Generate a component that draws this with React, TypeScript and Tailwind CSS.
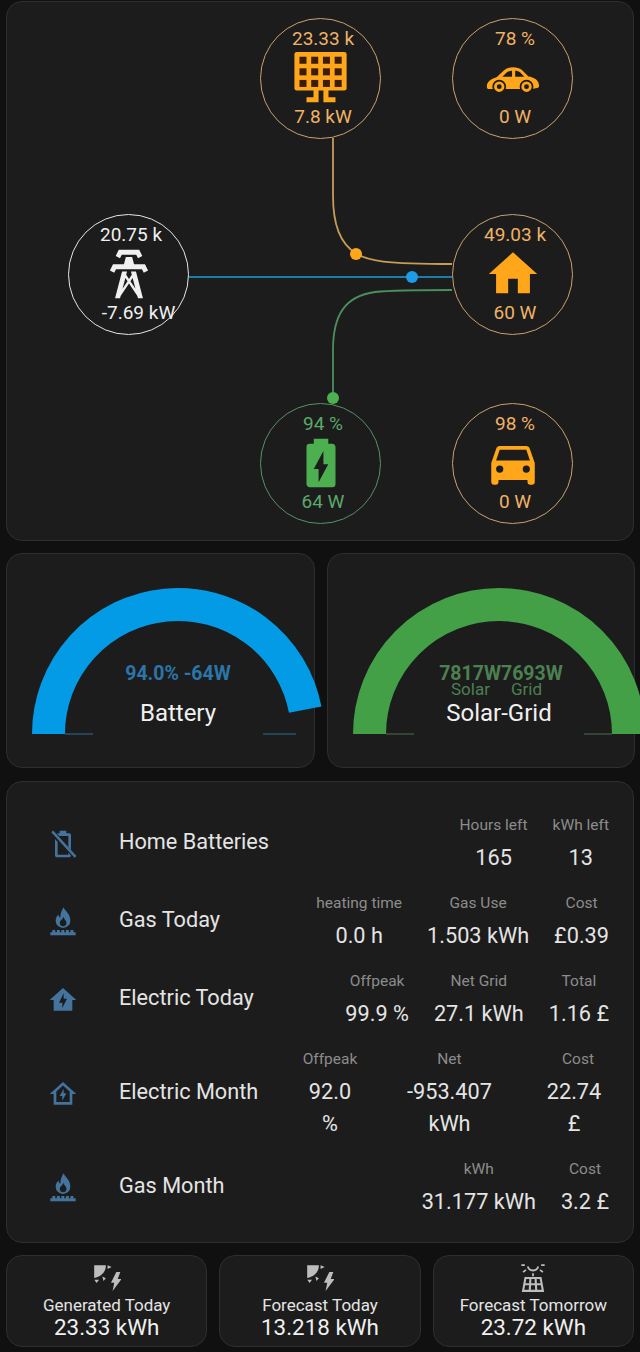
import React from "react";

const ORANGE = "#ffa61a";
const BLUE = "#44739e";

function Solar() {
  const holes = [];
  for (let r = 0; r < 3; r++) {
    for (let c = 0; c < 4; c++) {
      holes.push(<rect key={`${r}-${c}`} x={3.1 + c * 4.85} y={3.2 + r * 4.8} width="2.9" height="2.9" fill="#3a1d05" />);
    }
  }
  return (
    <svg viewBox="0 0 24 24" className="w-[58px] h-[58px]" fill={ORANGE}>
      <rect x="1" y="1.2" width="21.6" height="16" rx="1" />
      {holes}
      <path d="M8.9 17H11V20H8.9ZM13 17H15.1V20H13ZM6 20H11V22H6ZM13 20H18V22H13Z" />
    </svg>
  );
}

function CarSports() {
  return (
    <svg viewBox="0 0 24 24" className="w-[58px] h-[58px]">
      <path fill={ORANGE} d="M1.2 15.8C1 13.8 2.6 12.4 5.2 11.7L8.2 8.9C10.2 7.1 13.8 7.1 15.7 8.7L18.4 11.4C20.6 11.7 22.6 12.7 22.8 15.2C22.8 15.7 22.5 16 22 16.1L19.8 16.6H4.2L2 16.6C1.5 16.5 1.2 16.2 1.2 15.8Z" />
      <path fill="#1c1c1c" d="M7.6 11.5L9.4 9.7C10 9.2 10.9 9 11.6 9V11.5ZM12.9 9C13.7 9 14.4 9.2 15 9.7L16.7 11.5H12.9Z" />
      <circle cx="6.3" cy="15.6" r="2.5" fill={ORANGE} stroke="#1c1c1c" strokeWidth="0.7" />
      <circle cx="6.3" cy="15.6" r="1" fill="#1c1c1c" />
      <circle cx="17.6" cy="15.6" r="2.5" fill={ORANGE} stroke="#1c1c1c" strokeWidth="0.7" />
      <circle cx="17.6" cy="15.6" r="1" fill="#1c1c1c" />
    </svg>
  );
}

function Tower() {
  return (
    <svg viewBox="0 0 24 24" className="w-[58px] h-[58px]" fill="#f0f0f0">
      <path d="M8.28,5.45L6.5,4.55L7.76,2H16.23L17.5,4.55L15.72,5.44L15,4H9L8.28,5.45M18.62,8H14.09L13.3,5H10.7L9.91,8H5.38L4.1,10.55L5.89,11.44L6.62,10H17.38L18.1,11.45L19.89,10.56L18.62,8M17.77,22H15.7L15.46,21.1L12,15.9L8.53,21.1L8.3,22H6.23L9.12,11H11.19L10.83,12.35L12,14.1L13.16,12.35L12.81,11H14.88L17.77,22M11.4,15L10.5,13.65L9.32,18.13L11.4,15M14.68,18.12L13.5,13.64L12.6,15L14.68,18.12Z" />
    </svg>
  );
}

function Home() {
  return (
    <svg viewBox="0 0 24 24" className="w-[58px] h-[58px]" fill={ORANGE}>
      <path d="M10,20V14H14V20H19V12H22L12,3L2,12H5V20H10Z" />
    </svg>
  );
}

function BatteryCharging() {
  return (
    <svg viewBox="0 0 24 24" className="w-[58px] h-[58px]" fill="#4caf50">
      <path fillRule="evenodd" d="M16.67,4H15V2H9V4H7.33A1.33,1.33 0 0,0 6,5.33V20.67C6,21.4 6.6,22 7.33,22H16.67A1.33,1.33 0 0,0 18,20.67V5.33C18,4.6 17.4,4 16.67,4M11,20V14.5H9L13,7V12.5H15L11,20Z" />
    </svg>
  );
}

function Car() {
  return (
    <svg viewBox="0 0 24 24" className="w-[58px] h-[58px]" fill={ORANGE}>
      <path fillRule="evenodd" d="M5,11L6.5,6.5H17.5L19,11H5ZM17.5,16A1.5,1.5 0 0,1 16,14.5A1.5,1.5 0 0,1 17.5,13A1.5,1.5 0 0,1 19,14.5A1.5,1.5 0 0,1 17.5,16ZM6.5,16A1.5,1.5 0 0,1 5,14.5A1.5,1.5 0 0,1 6.5,13A1.5,1.5 0 0,1 8,14.5A1.5,1.5 0 0,1 6.5,16ZM18.92,6C18.72,5.42 18.16,5 17.5,5H6.5C5.84,5 5.28,5.42 5.08,6L3,12V20A1,1 0 0,0 4,21H5A1,1 0 0,0 6,20V19H18V20A1,1 0 0,0 19,21H20A1,1 0 0,0 21,20V12L18.92,6Z" />
    </svg>
  );
}

function BatteryOff() {
  return (
    <svg viewBox="0 0 24 24" className="w-8 h-8" fill={BLUE}>
      <path d="M9.5 2h5v2h2.2C17.5 4 18 4.6 18 5.3v11.2l-2-2.2V6H9.2L7.5 4.2C7.7 4.1 7.9 4 8 4h1.5ZM6 8.3l2 2.2V20h8v-1.5l2 2.2c-.1.8-.7 1.3-1.3 1.3H7.3C6.6 22 6 21.4 6 20.7Z" />
      <path d="M3.2 3.2L4.6 1.9 22.1 21 20.7 22.4Z" />
    </svg>
  );
}

function Burner() {
  return (
    <svg viewBox="0 0 24 24" className="w-8 h-8" fill={BLUE}>
      <path fillRule="evenodd" d="M12.5 1C13 3.5 17.5 5.5 17.5 11A5.5 5.5 0 0 1 6.5 11C6.5 8.8 7.5 7.4 8.6 6.3C8.7 7.6 9.3 8.4 10 8.8C10 5.8 11 3 12.5 1ZM12.2 8C12 10 9.6 10.6 9.6 12.6A2.5 2.5 0 0 0 14.6 12.6C14.6 10.8 12.9 10 12.2 8Z" />
      <path d="M2.5 22V19.6H4V18H6.2V19.6H7.4V18H9.6V19.6H10.8V18H13V19.6H14.2V18H16.4V19.6H17.6V18H19.8V19.6H21.5V22Z" />
    </svg>
  );
}

function HomeBolt() {
  return (
    <svg viewBox="0 0 24 24" className="w-8 h-8" fill={BLUE}>
      <path fillRule="evenodd" d="M12 3L2 12H5V20H19V12H22L12 3ZM11.5 18V14H9L12.5 7V11H15L11.5 18Z" />
    </svg>
  );
}

function HomeBoltOutline() {
  return (
    <svg viewBox="0 0 24 24" className="w-8 h-8" fill={BLUE}>
      <path fillRule="evenodd" d="M12 3L2 12H5V20H19V12H22L12 3ZM12 5.7L17 10.2V18H7V10.2L12 5.7ZM11.5 17V13.5H9.5L12.5 8V11.5H14.5L11.5 17Z" />
    </svg>
  );
}

function SunBolt() {
  return (
    <svg viewBox="0 0 24 24" className="w-7 h-7" fill="#bdbdbd">
      <path d="M1 1H11C11.2 6 8 10.5 1 12Z" />
      <path d="M12.5 1L16 2.6 12.5 4.2ZM1.2 13.4H5.2L3 16.2ZM8 10.8L11 12.2 9 14.6Z" />
      <path d="M20 6.9L15.4 16H18.2L16.8 23.2L24.6 12.8H21.2L23.4 6.9Z" />
    </svg>
  );
}

function SunPanel() {
  return (
    <svg viewBox="0 0 24 24" className="w-7 h-7" fill="none" stroke="#bdbdbd">
      <path strokeWidth="1.6" d="M7.5 2.2A4.7 4.7 0 0 0 16.5 2.2" />
      <path strokeWidth="1.5" d="M2 1H5M19 1H22M3.5 7L6 5M20.5 7L18 5M12 8V10.6" />
      <path strokeWidth="1.8" d="M5.5 12H18.5L20.5 23H3.5ZM4.6 17.4H19.4M9.8 12L9.2 23M14.2 12L14.8 23" fill="none" />
    </svg>
  );
}

function Node({
  top,
  bottom,
  color,
  border,
  bottomClass = "ml-[5px]",
  children,
}: {
  top: string;
  bottom: string;
  color: string;
  border: string;
  bottomClass?: string;
  children: React.ReactNode;
}) {
  return (
    <div
      className={`w-[121px] h-[121px] shrink-0 rounded-full border flex flex-col items-center pt-[10px] text-[19px] leading-[20px] whitespace-nowrap ${color} ${border}`}
    >
      <span className="ml-[5px]">{top}</span>
      <div className="h-[58px]">{children}</div>
      <span className={bottomClass}>{bottom}</span>
    </div>
  );
}

function Flow() {
  return (
    <div className="relative h-[540px] rounded-2xl bg-[#1c1c1c] border border-[#2e2e2e] pl-[61px] pt-[16px]">
      <svg className="absolute left-[-7px] top-[-2px] w-[640px] h-[560px] pointer-events-none" viewBox="0 0 640 560" fill="none">
        <path d="M333 138V195C333 225 340 243 356 253.5C368 261 385 264 452 264" stroke="#c79b58" strokeWidth="1.8" />
        <path d="M189 277H452" stroke="#1a7ea6" strokeWidth="1.8" />
        <path d="M333 398V350C333 315 345 296 375 292C395 290 420 290 452 290" stroke="#4b8f5e" strokeWidth="1.8" />
        <circle cx="356" cy="254" r="6" fill="#ffa61a" />
        <circle cx="412" cy="277" r="6" fill="#1e9be6" />
        <circle cx="333" cy="398" r="6" fill="#4caf50" />
      </svg>
      <div className="relative flex flex-col">
        <div className="flex gap-[71px] mb-[75px]">
          <div className="w-[121px] shrink-0" />
          <Node top="23.33 k" bottom="7.8 kW" color="text-[#efb266]" border="border-[#c7a36c]"><Solar /></Node>
          <Node top="78 %" bottom="0 W" color="text-[#efb266]" border="border-[#c7a36c]"><CarSports /></Node>
        </div>
        <div className="flex gap-[71px] mb-[68px]">
          <Node top="20.75 k" bottom="-7.69 kW" bottomClass="ml-[20px]" color="text-[#f0f0f0]" border="border-[#e6e6e6]"><Tower /></Node>
          <div className="w-[121px] shrink-0" />
          <Node top="49.03 k" bottom="60 W" color="text-[#efb266]" border="border-[#c7a36c]"><Home /></Node>
        </div>
        <div className="flex gap-[71px]">
          <div className="w-[121px] shrink-0" />
          <Node top="94 %" bottom="64 W" color="text-[#5ca86a]" border="border-[#5b8f66]"><BatteryCharging /></Node>
          <Node top="98 %" bottom="0 W" color="text-[#efb266]" border="border-[#c7a36c]"><Car /></Node>
        </div>
      </div>
    </div>
  );
}

function GaugeArc({ color, track, d, lines }: { color: string; track: string; d: string; lines: string }) {
  return (
    <svg className="absolute left-0 top-0 w-[308px] h-[215px] overflow-visible" viewBox="0 0 308 215" fill="none">
      <path d={d} stroke={color} strokeWidth="33" />
      <path d={lines} stroke={track} strokeWidth="1" />
    </svg>
  );
}

function Gauges() {
  return (
    <div className="grid grid-cols-[309px_308px] gap-3 h-[215px] mb-px">
      <div className="relative rounded-2xl bg-[#1c1c1c] border border-[#2e2e2e]">
        <GaugeArc color="#039be5" track="#2b6f94" d="M41.5 180A129.5 129.5 0 0 1 298.2 155.7" lines="M58 180H86M256 180H289" />
        <div className="absolute left-0 top-[107px] w-[342px] flex flex-col items-center">
          <span className="text-[19.5px] leading-[26px] font-bold text-[#2b75a8]">94.0% -64W</span>
          <span className="mt-[13px] text-[24px] leading-[26px] text-[#f0f0f0]">Battery</span>
        </div>
      </div>
      <div className="relative rounded-2xl bg-[#1c1c1c] border border-[#2e2e2e]">
        <GaugeArc color="#43a047" track="#4d6f50" d="M41.5 180A129.5 129.5 0 0 1 300.5 180" lines="M58 180H86M256 180H284" />
        <div className="absolute left-0 top-[107px] w-[342px] flex flex-col items-center">
          <span className="ml-[4px] text-[19.5px] leading-[26px] font-bold text-[#4b8050]">7817W7693W</span>
          <div className="-ml-[5px] -mt-[6px] h-[16px] flex gap-[21px] text-[17px] leading-[16px] text-[#4b8050]">
            <span>Solar</span>
            <span>Grid</span>
          </div>
          <span className="mt-[3px] text-[24px] leading-[26px] text-[#f0f0f0]">Solar-Grid</span>
        </div>
      </div>
    </div>
  );
}

function Col({ head, value, className = "", valueClass = "" }: { head: string; value: React.ReactNode; className?: string; valueClass?: string }) {
  return (
    <div className={`flex flex-col items-center text-center ${className}`}>
      <span className="text-[15.5px] leading-[24px] mb-[5px] text-[#8c8c8c] whitespace-nowrap">{head}</span>
      <span className={`text-[21.7px] leading-[32px] text-[#e4e4e4] whitespace-nowrap ${valueClass}`}>{value}</span>
    </div>
  );
}

function Row({ icon, name, children }: { icon: React.ReactNode; name: string; children: React.ReactNode }) {
  return (
    <div className="flex items-center">
      <div className="w-8 h-8 shrink-0">{icon}</div>
      <div className="ml-10 -mt-[3px] flex-1 text-[21.7px] leading-[26px] text-[#e4e4e4] whitespace-nowrap">{name}</div>
      <div className="flex gap-[25px]">{children}</div>
    </div>
  );
}

function Table() {
  return (
    <div className="h-[462px] rounded-2xl bg-[#1c1c1c] border border-[#2e2e2e] pl-[40px] pr-[24px] pt-[31px] flex flex-col gap-[17px]">
      <Row icon={<BatteryOff />} name="Home Batteries">
        <Col head="Hours left" value="165" />
        <Col head="kWh left" value="13" />
      </Row>
      <Row icon={<Burner />} name="Gas Today">
        <Col head="heating time" value="0.0 h" />
        <Col head="Gas Use" value="1.503 kWh" />
        <Col head="Cost" value="£0.39" />
      </Row>
      <Row icon={<HomeBolt />} name="Electric Today">
        <Col head="Offpeak" value="99.9 %" />
        <Col head="Net Grid" value="27.1 kWh" />
        <Col head="Total" value="1.16 £" />
      </Row>
      <Row icon={<HomeBoltOutline />} name="Electric Month">
        <div className="flex gap-[50px]">
          <Col head="Offpeak" value={<>92.0<br />%</>} className="w-[54px]" />
          <Col head="Net" value={<>-953.407<br />kWh</>} className="w-[85px]" />
        </div>
        <Col head="Cost" value={<>22.74<br />£</>} valueClass="-ml-2" className="w-[62px] ml-[30px]" />
      </Row>
      <Row icon={<Burner />} name="Gas Month">
        <Col head="kWh" value="31.177 kWh" />
        <Col head="Cost" value="3.2 £" />
      </Row>
    </div>
  );
}

function Stat({ icon, title, value }: { icon: React.ReactNode; title: string; value: string }) {
  return (
    <div className="flex-1 h-[92px] rounded-2xl bg-[#1c1c1c] border border-[#2e2e2e] flex flex-col items-center pt-[8px]">
      <div className="h-7">{icon}</div>
      <span className="mt-[3px] text-[17px] leading-[20px] text-[#e4e4e4] whitespace-nowrap">{title}</span>
      <span className="text-[22.4px] leading-[24px] text-[#f0f0f0] whitespace-nowrap">{value}</span>
    </div>
  );
}

export default function App() {
  return (
    <div className="w-[640px] h-[1352px] overflow-hidden bg-[#101010] px-[6px] pt-[1px] flex flex-col gap-3 font-['Roboto',sans-serif]">
      <Flow />
      <Gauges />
      <Table />
      <div className="flex gap-3">
        <Stat icon={<SunBolt />} title="Generated Today" value="23.33 kWh" />
        <Stat icon={<SunBolt />} title="Forecast Today" value="13.218 kWh" />
        <Stat icon={<SunPanel />} title="Forecast Tomorrow" value="23.72 kWh" />
      </div>
    </div>
  );
}
